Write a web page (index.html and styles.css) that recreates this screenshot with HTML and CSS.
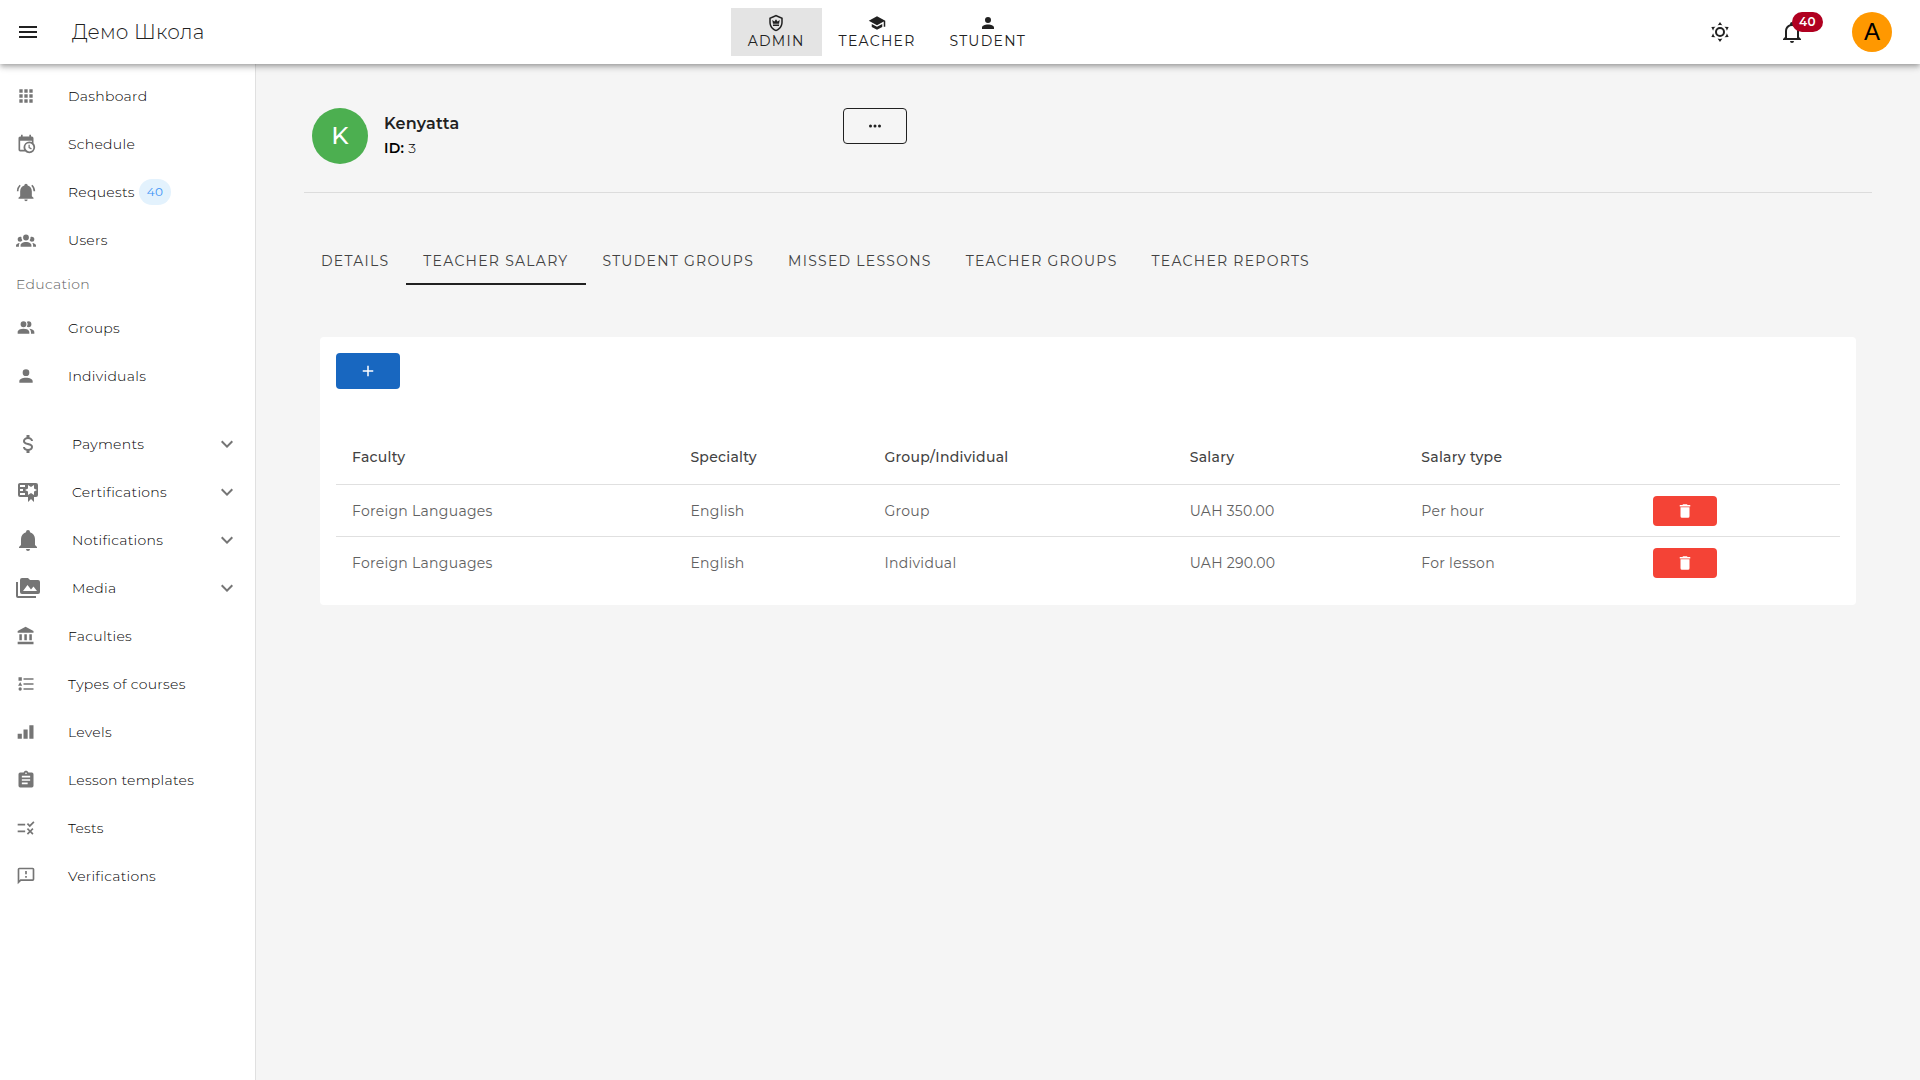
FILE: index.html
```html
<!DOCTYPE html>
<html lang="en">
<head>
    <meta charset="UTF-8">
    <meta name="viewport" content="width=device-width, initial-scale=1.0">
    <title>Демо Школа</title>
    <link rel="stylesheet" href="styles.css">
</head>
<body>
    <header class="app-bar">
        <div class="brand">
            <button class="icon-btn" type="button" aria-label="Menu">
                <svg class="icon" viewBox="0 0 24 24"><path d="M3 6h18v2H3V6m0 5h18v2H3v-2m0 5h18v2H3v-2z"/></svg>
            </button>
            <span class="brand-title">Демо Школа</span>
        </div>
        <nav class="roles">
            <button class="role active" type="button">
                <svg class="icon icon-sm" viewBox="0 0 24 24"><path d="M12 1L3 5v6c0 5.5 3.8 10.7 9 12 5.2-1.3 9-6.5 9-12V5l-9-4m7 10c0 4.5-3 8.7-7 9.9-4-1.2-7-5.4-7-9.9V6.3l7-3.1 7 3.1V11M8 14h8v2H8v-2m9-6l-1 5H8L7 8l3 2 2-3 2 3 3-2z"/></svg>
                Admin
            </button>
            <button class="role" type="button">
                <svg class="icon icon-sm" viewBox="0 0 24 24"><path d="M12 3L1 9l11 6 9-4.91V17h2V9M5 13.18v4L12 21l7-3.82v-4L12 17l-7-3.82z"/></svg>
                Teacher
            </button>
            <button class="role" type="button">
                <svg class="icon icon-sm" viewBox="0 0 24 24"><path d="M12 4a4 4 0 0 1 0 8 4 4 0 0 1 0-8m0 10c4.42 0 8 1.79 8 4v2H4v-2c0-2.21 3.58-4 8-4z"/></svg>
                Student
            </button>
        </nav>
        <div class="actions">
            <button class="icon-btn" type="button" aria-label="Theme">
                <svg class="icon" viewBox="0 0 24 24"><path d="M12 7a5 5 0 0 1 5 5 5 5 0 0 1-5 5 5 5 0 0 1-5-5 5 5 0 0 1 5-5m0 2a3 3 0 0 0-3 3 3 3 0 0 0 3 3 3 3 0 0 0 3-3 3 3 0 0 0-3-3m0-7l2.39 3.42C13.65 5.15 12.84 5 12 5s-1.65.15-2.39.42L12 2M3.34 7l4.16-.35A7.2 7.2 0 0 0 5.94 8.5c-.44.74-.69 1.5-.83 2.29L3.34 7m.02 10l1.76-3.77a7.131 7.131 0 0 0 2.38 4.14L3.36 17M20.65 7l-1.77 3.79a7.023 7.023 0 0 0-2.38-4.15l4.15.36m-.01 10l-4.14.36c.59-.51 1.12-1.14 1.54-1.86.42-.73.69-1.5.83-2.29L20.64 17M12 22l-2.41-3.44c.74.27 1.55.44 2.41.44.82 0 1.63-.17 2.37-.44L12 22z"/></svg>
            </button>
            <button class="icon-btn" type="button" aria-label="Notifications">
                <svg class="icon" viewBox="0 0 24 24"><path d="M10 21h4a2 2 0 0 1-4 0m11-2v1H3v-1l2-2v-6c0-3.1 2.03-5.83 5-6.71V4a2 2 0 0 1 4 0v.29c2.97.88 5 3.61 5 6.71v6l2 2m-4-8a5 5 0 0 0-10 0v7h10v-7z"/></svg>
                <span class="badge">40</span>
            </button>
            <button class="user" type="button">A</button>
        </div>
    </header>

    <div class="layout">
        <aside class="sidebar">
            <nav>
                <a class="item" href="#"><svg class="icon" viewBox="0 0 24 24"><path d="M4 4h4v4H4V4m6 0h4v4h-4V4m6 0h4v4h-4V4M4 10h4v4H4v-4m6 0h4v4h-4v-4m6 0h4v4h-4v-4M4 16h4v4H4v-4m6 0h4v4h-4v-4m6 0h4v4h-4v-4z"/></svg>Dashboard</a>
                <a class="item" href="#"><svg class="icon" viewBox="0 0 24 24"><path d="M15 13h1.5v2.82l2.44 1.41-.75 1.3L15 16.69V13m4-5H5v11h4.67c-.43-.91-.67-1.93-.67-3a7 7 0 0 1 7-7c1.07 0 2.09.24 3 .67V8M5 21a2 2 0 0 1-2-2V5c0-1.11.89-2 2-2h1V1h2v2h8V1h2v2h1a2 2 0 0 1 2 2v6.1c1.24 1.26 2 2.99 2 4.9a7 7 0 0 1-7 7c-1.91 0-3.64-.76-4.9-2H5m11-9.85A4.85 4.85 0 0 0 11.15 16c0 2.68 2.17 4.85 4.85 4.85A4.85 4.85 0 0 0 20.85 16c0-2.68-2.17-4.85-4.85-4.85z"/></svg>Schedule</a>
                <a class="item" href="#"><svg class="icon" viewBox="0 0 24 24"><path d="M21 19v1H3v-1l2-2v-6c0-3.1 2.03-5.83 5-6.71V4a2 2 0 0 1 4 0v.29c2.97.88 5 3.61 5 6.71v6l2 2m-7 2a2 2 0 0 1-4 0m9.75-17.81l-1.42 1.42A8.982 8.982 0 0 1 21 11h2c0-2.93-1.16-5.75-3.25-7.81M1 11h2c0-2.4.96-4.7 2.67-6.39L4.25 3.19A10.96 10.96 0 0 0 1 11z"/></svg>Requests<span class="chip">40</span></a>
                <a class="item" href="#"><svg class="icon" viewBox="0 0 24 24"><path d="M12 5.5A3.5 3.5 0 0 1 15.5 9a3.5 3.5 0 0 1-3.5 3.5A3.5 3.5 0 0 1 8.5 9 3.5 3.5 0 0 1 12 5.5M5 8c.56 0 1.08.15 1.53.42-.15 1.43.27 2.85 1.13 3.96C7.16 13.34 6.16 14 5 14a3 3 0 0 1-3-3 3 3 0 0 1 3-3m14 0a3 3 0 0 1 3 3 3 3 0 0 1-3 3c-1.16 0-2.16-.66-2.66-1.62a5.536 5.536 0 0 0 1.13-3.96c.45-.27.97-.42 1.53-.42M5.5 18.25c0-2.07 2.91-3.75 6.5-3.75s6.5 1.68 6.5 3.75V20h-13v-1.75M0 20v-1.5c0-1.39 1.89-2.56 4.45-2.9-.59.68-.95 1.62-.95 2.65V20H0m24 0h-3.5v-1.75c0-1.03-.36-1.97-.95-2.65 2.56.34 4.45 1.51 4.45 2.9V20z"/></svg>Users</a>

                <div class="subheader">Education</div>
                <a class="item" href="#"><svg class="icon" viewBox="0 0 24 24"><path d="M16 17v2H2v-2s0-4 7-4 7 4 7 4m-3.5-9.5A3.5 3.5 0 1 0 9 11a3.5 3.5 0 0 0 3.5-3.5m3.44 5.5A5.32 5.32 0 0 1 18 17v2h4v-2s0-3.63-6.06-4M15 4a3.39 3.39 0 0 0-1.93.59 5 5 0 0 1 0 5.82A3.39 3.39 0 0 0 15 11a3.5 3.5 0 0 0 0-7z"/></svg>Groups</a>
                <a class="item" href="#"><svg class="icon" viewBox="0 0 24 24"><path d="M12 4a4 4 0 0 1 0 8 4 4 0 0 1 0-8m0 10c4.42 0 8 1.79 8 4v2H4v-2c0-2.21 3.58-4 8-4z"/></svg>Individuals</a>

                <div class="menu-groups">
                    <button class="item group" type="button"><svg class="icon" viewBox="0 0 24 24"><path d="M7 15h2c0 1.08 1.37 2 3 2s3-.92 3-2c0-1.1-1.04-1.5-3.24-2.03C9.64 12.44 7 11.78 7 9c0-1.79 1.47-3.31 3.5-3.82V3h3v2.18C15.53 5.69 17 7.21 17 9h-2c0-1.08-1.37-2-3-2s-3 .92-3 2c0 1.1 1.04 1.5 3.24 2.03C14.36 11.56 17 12.22 17 15c0 1.79-1.47 3.31-3.5 3.82V21h-3v-2.18C8.47 18.31 7 16.79 7 15z"/></svg>Payments<svg class="icon arrow" viewBox="0 0 24 24"><path d="M7.41 8.58L12 13.17l4.59-4.59L18 10l-6 6-6-6z"/></svg></button>
                    <button class="item group" type="button"><svg class="icon" viewBox="0 0 24 24"><path d="M4 3c-1.11 0-2 .89-2 2v10a2 2 0 0 0 2 2h8v5l3-3 3 3v-5h2a2 2 0 0 0 2-2V5a2 2 0 0 0-2-2H4m8 2l3 2 3-2v3.5l3 1.5-3 1.5V15l-3-2-3 2v-3.5L9 10l3-1.5V5M4 5h5v2H4V5m0 4h3v2H4V9m0 4h5v2H4v-2z"/></svg>Certifications<svg class="icon arrow" viewBox="0 0 24 24"><path d="M7.41 8.58L12 13.17l4.59-4.59L18 10l-6 6-6-6z"/></svg></button>
                    <button class="item group" type="button"><svg class="icon" viewBox="0 0 24 24"><path d="M21 19v1H3v-1l2-2v-6c0-3.1 2.03-5.83 5-6.71V4a2 2 0 0 1 4 0v.29c2.97.88 5 3.61 5 6.71v6l2 2m-7 2a2 2 0 0 1-4 0z"/></svg>Notifications<svg class="icon arrow" viewBox="0 0 24 24"><path d="M7.41 8.58L12 13.17l4.59-4.59L18 10l-6 6-6-6z"/></svg></button>
                    <button class="item group" type="button"><svg class="icon" viewBox="0 0 24 24"><path d="M7 15l4.5-6 3.5 4.5 2.5-3L21 15m1-11h-8l-2-2H6a2 2 0 0 0-2 2v12a2 2 0 0 0 2 2h16a2 2 0 0 0 2-2V6a2 2 0 0 0-2-2M2 6H0v14a2 2 0 0 0 2 2h18v-2H2V6z"/></svg>Media<svg class="icon arrow" viewBox="0 0 24 24"><path d="M7.41 8.58L12 13.17l4.59-4.59L18 10l-6 6-6-6z"/></svg></button>
                </div>

                <a class="item" href="#"><svg class="icon" viewBox="0 0 24 24"><path d="M11.5 1L2 6v2h19V6l-9.5-5M4 10v7h3v-7H4m6 0v7h3v-7h-3m6 0v7h3v-7h-3M2 19v3h19v-3H2z"/></svg>Faculties</a>
                <a class="item" href="#"><svg class="icon" viewBox="0 0 24 24"><path d="M5 9.5L7.5 14h-5L5 9.5M3 4h4v4H3V4m2 16a2 2 0 0 0 0-4 2 2 0 0 0 0 4M9 5v2h12V5H9m0 14h12v-2H9v2m0-6h12v-2H9v2z"/></svg>Types of courses</a>
                <a class="item" href="#"><svg class="icon" viewBox="0 0 24 24"><path d="M2 14h5v6H2v-6m7-5h5v11H9V9m7-5h5v16h-5V4z"/></svg>Levels</a>
                <a class="item" href="#"><svg class="icon" viewBox="0 0 24 24"><path d="M17 9H7V7h10m0 6H7v-2h10m-3 6H7v-2h7M12 3a1 1 0 0 1 0 2 1 1 0 0 1 0-2m7 0h-4.18C14.4 1.84 13.3 1 12 1c-1.3 0-2.4.84-2.82 2H5a2 2 0 0 0-2 2v14a2 2 0 0 0 2 2h14a2 2 0 0 0 2-2V5a2 2 0 0 0-2-2z"/></svg>Lesson templates</a>
                <a class="item" href="#"><svg class="icon" viewBox="0 0 24 24"><path d="M16.54 11L13 7.46l1.41-1.41 2.12 2.12 4.24-4.24 1.41 1.41L16.54 11zM11 7H2v2h9V7zm10 6.41L19.59 12 17 14.59 14.41 12 13 13.41 15.59 16 13 18.59 14.41 20 17 17.41 19.59 20 21 18.59 18.41 16 21 13.41zM11 15H2v2h9v-2z"/></svg>Tests</a>
                <a class="item" href="#"><svg class="icon" viewBox="0 0 24 24"><path d="M13 10h-2V6h2m0 8h-2v-2h2m7-10H4a2 2 0 0 0-2 2v18l4-4h14a2 2 0 0 0 2-2V4a2 2 0 0 0-2-2m0 14H5.2L4 17.2V4h16v12z"/></svg>Verifications</a>
            </nav>
        </aside>

        <main class="content">
            <section class="profile">
                <div class="profile-user">
                    <div class="profile-avatar">K</div>
                    <div>
                        <div class="profile-name">Kenyatta</div>
                        <div class="profile-id"><b>ID:</b> 3</div>
                    </div>
                </div>
                <button class="btn btn-outlined" type="button" aria-label="More">
                    <svg class="icon icon-sm" viewBox="0 0 24 24"><path d="M6 10a2 2 0 0 1 0 4 2 2 0 0 1 0-4m6 0a2 2 0 0 1 0 4 2 2 0 0 1 0-4m6 0a2 2 0 0 1 0 4 2 2 0 0 1 0-4z"/></svg>
                </button>
            </section>

            <nav class="tabs">
                <button class="tab" type="button">Details</button>
                <button class="tab active" type="button">Teacher salary</button>
                <button class="tab" type="button">Student groups</button>
                <button class="tab" type="button">Missed lessons</button>
                <button class="tab" type="button">Teacher groups</button>
                <button class="tab" type="button">Teacher reports</button>
            </nav>

            <section class="card">
                <button class="btn btn-primary" type="button" aria-label="Add">
                    <svg class="icon icon-sm" viewBox="0 0 24 24"><path d="M19 13h-6v6h-2v-6H5v-2h6V5h2v6h6v2z"/></svg>
                </button>
                <table class="salary">
                    <colgroup>
                        <col class="col-faculty">
                        <col class="col-specialty">
                        <col class="col-group">
                        <col class="col-salary">
                        <col class="col-salary">
                        <col>
                    </colgroup>
                    <thead>
                        <tr>
                            <th>Faculty</th>
                            <th>Specialty</th>
                            <th>Group/Individual</th>
                            <th>Salary</th>
                            <th>Salary type</th>
                            <th></th>
                        </tr>
                    </thead>
                    <tbody>
                        <tr>
                            <td>Foreign Languages</td>
                            <td>English</td>
                            <td>Group</td>
                            <td>UAH 350.00</td>
                            <td>Per hour</td>
                            <td>
                                <button class="btn btn-delete" type="button" aria-label="Delete">
                                    <svg class="icon icon-sm" viewBox="0 0 24 24"><path d="M19 4h-3.5l-1-1h-5l-1 1H5v2h14M6 19a2 2 0 0 0 2 2h8a2 2 0 0 0 2-2V7H6v12z"/></svg>
                                </button>
                            </td>
                        </tr>
                        <tr>
                            <td>Foreign Languages</td>
                            <td>English</td>
                            <td>Individual</td>
                            <td>UAH 290.00</td>
                            <td>For lesson</td>
                            <td>
                                <button class="btn btn-delete" type="button" aria-label="Delete">
                                    <svg class="icon icon-sm" viewBox="0 0 24 24"><path d="M19 4h-3.5l-1-1h-5l-1 1H5v2h14M6 19a2 2 0 0 0 2 2h8a2 2 0 0 0 2-2V7H6v12z"/></svg>
                                </button>
                            </td>
                        </tr>
                    </tbody>
                </table>
            </section>
        </main>
    </div>
</body>
</html>
```

FILE: styles.css
```css
* {
    box-sizing: border-box;
}
body {
    margin: 0;
    min-height: 100vh;
    display: flex;
    flex-direction: column;
    font-family: Montserrat, Inter, "Open Sans", sans-serif;
    font-size: 14px;
    line-height: 20px;
    letter-spacing: 0.02em;
    color: #212121;
    background-color: #f5f5f5;
}
button {
    font: inherit;
    letter-spacing: inherit;
    color: inherit;
    background: none;
    border: none;
    padding: 0;
    cursor: pointer;
}
.icon {
    display: block;
    flex: none;
    width: 24px;
    height: 24px;
    fill: currentColor;
}
.icon-sm {
    width: 18px;
    height: 18px;
}

/* top bar */
.app-bar {
    display: grid;
    grid-template-columns: 1fr auto 1.2fr;
    align-items: center;
    height: 64px;
    background-color: #fff;
    box-shadow: 0 2px 4px -1px rgba(0,0,0,0.2), 0 4px 5px rgba(0,0,0,0.14), 0 1px 10px rgba(0,0,0,0.12);
    position: relative;
    z-index: 1;
}
.brand {
    display: flex;
    align-items: center;
    gap: 20px;
    padding-left: 4px;
}
.brand-title {
    font-size: 20px;
    line-height: 32px;
    font-weight: 300;
    letter-spacing: 0.01em;
}
.icon-btn {
    width: 48px;
    height: 48px;
    display: flex;
    align-items: center;
    justify-content: center;
    position: relative;
}
.roles {
    display: flex;
}
.role {
    display: flex;
    flex-direction: column;
    align-items: center;
    justify-content: center;
    height: 48px;
    padding: 0 17px;
    line-height: 18px;
    letter-spacing: 0.09em;
    text-transform: uppercase;
}
.role.active {
    background-color: #e4e4e4;
}
.actions {
    display: flex;
    align-items: center;
    justify-content: flex-end;
    gap: 24px;
    padding-right: 28px;
}
.badge {
    position: absolute;
    left: 24px;
    top: 4px;
    padding: 0 7px;
    height: 20px;
    border-radius: 10px;
    font-size: 12px;
    font-weight: 600;
    color: #fff;
    background-color: #b00020;
}
.user {
    width: 40px;
    height: 40px;
    margin-left: 12px;
    border-radius: 50%;
    font-family: "Liberation Sans", Arial, sans-serif;
    font-size: 24px;
    letter-spacing: normal;
    color: #000;
    background-color: #ff9800;
}

/* sidebar */
.layout {
    flex: 1;
    display: flex;
}
.sidebar {
    flex: none;
    width: 256px;
    padding-top: 8px;
    background-color: #fff;
    border-right: 1px solid #e0e0e0;
}
.item {
    display: flex;
    align-items: center;
    width: 100%;
    height: 48px;
    padding: 0 16px;
    font-weight: 300;
    color: #000;
    text-decoration: none;
}
.item .icon {
    width: 20px;
    height: 20px;
    margin-right: 32px;
    color: #757575;
}
.group .icon {
    width: 24px;
    height: 24px;
}
.group .arrow {
    margin: 0 0 0 auto;
}
.chip {
    margin-left: 4px;
    padding: 0 8px;
    line-height: 26px;
    font-size: 12px;
    font-weight: 400;
    border-radius: 13px;
    color: #3d94f6;
    background-color: #e3f2fd;
}
.subheader {
    padding: 0 16px;
    line-height: 40px;
    font-weight: 300;
    color: #616161;
}
.menu-groups {
    padding-top: 20px;
}

/* page */
.content {
    flex: 1;
    min-width: 0;
    padding: 44px 48px;
}
.profile {
    display: grid;
    grid-template-columns: 1fr 2fr;
    column-gap: 20px;
    align-items: start;
    padding: 0 8px 28px;
    border-bottom: 1px solid #dcdcdc;
}
.profile-user {
    display: flex;
    gap: 16px;
}
.profile-avatar {
    width: 56px;
    height: 56px;
    border-radius: 50%;
    line-height: 56px;
    font-size: 24px;
    font-weight: 500;
    text-align: center;
    color: #fff;
    background-color: #4caf50;
}
.profile-name {
    padding-top: 4px;
    font-size: 16px;
    line-height: 24px;
    font-weight: 600;
}
.profile-id {
    line-height: 24px;
    font-weight: 300;
    color: #000;
}
.profile-id b {
    font-weight: 600;
}
.btn {
    display: flex;
    align-items: center;
    justify-content: center;
    width: 64px;
    height: 36px;
    border-radius: 4px;
}
.btn-outlined {
    border: 1px solid #212121;
}
.btn-primary {
    color: #fff;
    background-color: #1867c0;
}
.btn-delete {
    height: 30px;
    color: #fff;
    background-color: #f44336;
}
.tabs {
    display: flex;
    padding-top: 44px;
}
.tab {
    height: 48px;
    padding: 0 17px;
    letter-spacing: 0.09em;
    text-transform: uppercase;
    color: #424242;
}
.tab.active {
    box-shadow: inset 0 -2px #212121;
}
.card {
    margin: 52px 16px 0;
    padding: 16px;
    background-color: #fff;
    border-radius: 4px;
}
.salary {
    width: 100%;
    margin-top: 40px;
    table-layout: fixed;
    border-spacing: 0;
    text-align: left;
}
.col-faculty {
    width: 22.5%;
}
.col-specialty {
    width: 12.9%;
}
.col-group {
    width: 20.3%;
}
.col-salary {
    width: 15.4%;
}
.salary th {
    height: 56px;
    padding: 0 16px;
    font-weight: 500;
    color: #424242;
    border-bottom: 1px solid #e0e0e0;
}
.salary td {
    height: 52px;
    padding: 0 16px;
    color: #616161;
    border-bottom: 1px solid #e0e0e0;
}
.salary tr:last-child td {
    border-bottom: none;
}
```
